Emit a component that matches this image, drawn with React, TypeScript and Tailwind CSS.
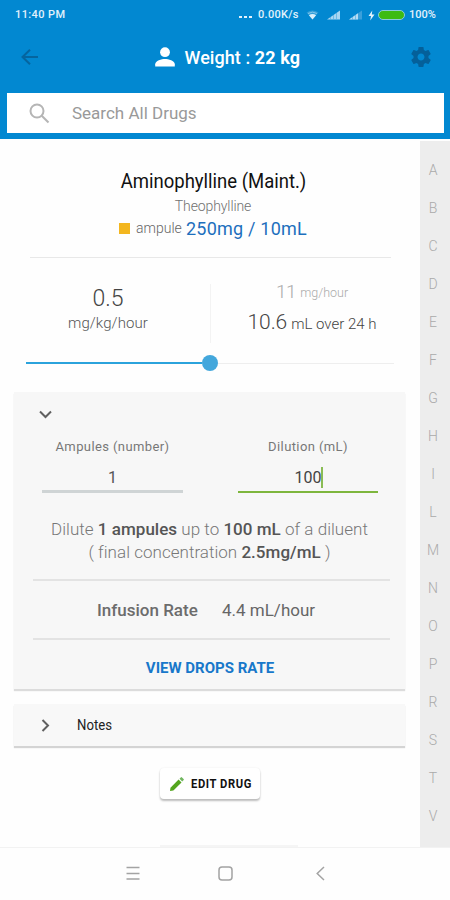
import React from "react";

const LETTERS = ["A", "B", "C", "D", "E", "F", "G", "H", "I", "L", "M", "N", "O", "P", "R", "S", "T", "V"];

function StatusBar() {
  return (
    <div className="flex h-[30px] items-center pl-[15px] pr-[14px] text-[11px] font-medium text-[#e2f2fc]">
      <span className="mr-auto tracking-[0.4px]">11:40 PM</span>
      <svg className="mt-[4px]" width="14" height="4" fill="currentColor">
        <rect x="0" y="1" width="3" height="2" />
        <rect x="5" y="1" width="3" height="2" />
        <rect x="10" y="1" width="3" height="2" />
      </svg>
      <span className="ml-[5px] w-[41px] whitespace-nowrap tracking-[0.3px]">0.00K/s</span>
      <svg className="ml-[7px]" width="13" height="12" viewBox="0 0 13 12" fill="none">
        <path d="M0.5 3.5Q6.5 -0.5 12.5 3.5L6.5 10.5Z" fill="#ffffff" opacity="0.18" />
        <path d="M2 4.5Q6.5 1.7 11 4.5" stroke="#d6edfa" opacity="0.5" />
        <path d="M2.9 6.2Q6.5 3.7 10.1 6.2L6.5 10.5Z" fill="#d9effb" />
      </svg>
      <svg className="ml-[8px]" width="13" height="10" viewBox="0 0 13 10">
        <path d="M0 9.5L13 0.5V9.5Z" fill="#a9d6f2" />
        <path d="M3.5 7V10M6.5 5V10M9.5 3V10" stroke="#55aee1" strokeWidth="0.7" />
      </svg>
      <svg className="ml-[9px]" width="13" height="10" viewBox="0 0 13 10">
        <path d="M0 9.5L13 0.5V9.5Z" fill="#3ba0db" />
        <path d="M0 9.5L9 3.3V9.5Z" fill="#b5dcf4" />
        <path d="M3.5 7V10M6.5 5V10" stroke="#55aee1" strokeWidth="0.7" />
      </svg>
      <svg className="ml-[6px]" width="7" height="11" viewBox="0 0 7 11" fill="currentColor">
        <path d="M4.3 0.5L0.5 6H3L2.2 10.5L6.5 4.6H3.8Z" />
      </svg>
      <span className="ml-[3px] h-[10px] w-[27px] rounded-[5px] border border-[#8ccbd8] bg-[#3dbb12]" />
      <span className="ml-[4px] w-[27px] whitespace-nowrap">100%</span>
    </div>
  );
}

function Header() {
  return (
    <header className="h-[139px] bg-[#0288d1]">
      <StatusBar />
      <div className="flex h-[54px] items-center justify-between pl-[20px] pr-[17px] text-white">
        <svg width="19" height="18" viewBox="0 0 19 18" fill="none" stroke="#05659f" strokeWidth="2">
          <path d="M18 9H2.8M10 1.7L2.5 9L10 16.3" />
        </svg>
        <div className="flex items-center pl-[7px]">
          <svg className="mb-px mr-[10px]" width="20" height="20" viewBox="0 0 20 20" fill="currentColor">
            <circle cx="10" cy="5.2" r="4.9" />
            <path d="M0.2 19.5V17.2C0.2 13.9 6.6 12.1 10 12.1S19.8 13.9 19.8 17.2V19.5Z" />
          </svg>
          <div className="w-[116px] whitespace-nowrap text-[18px] font-medium tracking-[0.07px]">
            Weight : <span className="font-bold">22 kg</span>
          </div>
        </div>
        <svg width="24" height="24" viewBox="0 0 24 24" fill="#04609a">
          <path d="M19.43 12.98c.04-.32.07-.64.07-.98s-.03-.66-.07-.98l2.11-1.65c.19-.15.24-.42.12-.64l-2-3.46c-.12-.22-.39-.3-.61-.22l-2.49 1c-.52-.4-1.08-.73-1.69-.98l-.38-2.65C14.46 2.18 14.25 2 14 2h-4c-.25 0-.46.18-.49.42l-.38 2.65c-.61.25-1.17.59-1.69.98l-2.49-1c-.23-.09-.49 0-.61.22l-2 3.46c-.13.22-.07.49.12.64l2.11 1.65c-.04.32-.07.65-.07.98s.03.66.07.98l-2.11 1.65c-.19.15-.24.42-.12.64l2 3.46c.12.22.39.3.61.22l2.49-1c.52.4 1.08.73 1.69.98l.38 2.65c.03.24.24.42.49.42h4c.25 0 .46-.18.49-.42l.38-2.65c.61-.25 1.17-.59 1.69-.98l2.49 1c.23.09.49 0 .61-.22l2-3.46c.12-.22.07-.49-.12-.64l-2.11-1.65zM12 15.5c-1.93 0-3.5-1.57-3.5-3.5s1.57-3.5 3.5-3.5 3.5 1.57 3.5 3.5-1.57 3.5-3.5 3.5z" />
        </svg>
      </div>
      <div className="ml-[7px] mr-[6px] mt-[9px] flex h-[40px] items-center bg-white pl-[22px]">
        <svg width="21" height="21" viewBox="0 0 21 21" fill="none" stroke="#b5b5b5" strokeWidth="2">
          <circle cx="8" cy="8" r="6.5" />
          <path d="M12.7 12.7L19.5 19.5" />
        </svg>
        <span className="ml-[22px] mt-[2px] text-[17px] text-[#999]">Search All Drugs</span>
      </div>
    </header>
  );
}

function DrugTitle() {
  return (
    <section className="mx-[30px] flex h-[119px] w-[361px] flex-col items-center border-b border-[#e8e8e8] pl-[5px] pt-[30px]">
      <h1 className="flex h-[24px] w-[185px] origin-center scale-x-[0.925] items-center justify-center whitespace-nowrap text-[20px] text-[#111]">
        Aminophylline (Maint.)
      </h1>
      <div className="mt-[4px] flex h-[18px] items-center text-[14px] font-light tracking-[-0.1px] text-[#707070]">Theophylline</div>
      <div className="mt-[1px] flex h-[24px] items-center">
        <span className="mt-[1px] size-[11px] bg-[#f3b61f]" />
        <span className="ml-[6px] w-[46px] text-[14px] font-light text-[#666]">ampule</span>
        <span className="ml-[4px] text-[18px] tracking-[0.22px] text-[#1d6fbd]">250mg / 10mL</span>
      </div>
    </section>
  );
}

function Dose() {
  return (
    <section className="h-[134px]">
      <div className="flex pl-[6px] pt-[26px]">
        <div className="flex h-[59px] w-[205px] flex-col items-center border-r border-[#f3f3f3] font-light text-[#444]">
          <div className="flex h-[28px] items-center pt-[2px] text-[23px]">0.5</div>
          <div className="flex h-[23px] items-center text-[15px] tracking-[0.1px] text-[#555]">mg/kg/hour</div>
        </div>
        <div className="flex h-[59px] w-[202px] flex-col items-center font-light text-[#444]">
          <div className="flex h-[16px] items-center text-[#aaa]">
            <span className="text-[19px] tracking-[-0.4px]">11</span>
            <span className="ml-[4px] mt-[2px] text-[12.5px]">mg/hour</span>
          </div>
          <div className="mt-[7px] flex h-[25px] items-baseline whitespace-nowrap">
            <span className="text-[21px] tracking-[-0.1px]">10.6</span>
            <span className="ml-[4px] text-[15px]">mL over 24 h</span>
          </div>
        </div>
      </div>
      <div className="ml-[26px] mt-[12px] flex h-[16px] w-[368px] items-center">
        <span className="h-[2px] w-[176px] bg-[#2ba3dc]" />
        <span className="size-[16px] rounded-full bg-[#43a7dc]" />
        <span className="h-px flex-1 bg-[#eeeeee]" />
      </div>
    </section>
  );
}

function DilutionCard() {
  return (
    <section className="ml-[14px] flex h-[297px] w-[391px] flex-col bg-[#f7f7f7] shadow-[0_2px_1px_#dcdcdc]">
      <svg className="ml-[25px] mt-[18px] shrink-0" width="13" height="9" viewBox="0 0 13 9" fill="none" stroke="#606060" strokeWidth="2">
        <path d="M1 1.5L6.5 7L12 1.5" />
      </svg>
      <div className="mt-[15px] flex pl-[28px]">
        <div className="flex w-[141px] flex-col items-center border-b-[3px] border-[#cfd4d5] text-[#555]">
          <div className="flex h-[24px] items-center pt-px text-[13px] tracking-[0.4px] text-[#777]">Ampules (number)</div>
          <div className="flex h-[32px] w-full items-center justify-center pt-[7px] text-[16px]">1</div>
        </div>
        <div className="ml-[55px] flex h-[59px] w-[140px] flex-col items-center border-b-[2px] border-[#7eb63d] text-[#444]">
          <div className="flex h-[24px] items-center pt-px text-[13px] tracking-[0.4px] text-[#777]">Dilution (mL)</div>
          <div className="flex h-[33px] items-center pl-[2px] pt-[6px] text-[16px]">
            100
            <span className="mb-[1px] h-[21px] w-[2px] bg-[#8abc55]" />
          </div>
        </div>
      </div>
      <div className="mt-[25px] flex flex-col items-center text-[17px] font-light leading-[23px] text-[#777]">
        <p className="whitespace-nowrap tracking-[0.03px]">
          Dilute <b className="font-medium text-[#555]">1 ampules</b> up to <b className="font-medium text-[#555]">100 mL</b> of a diluent
        </p>
        <p className="whitespace-nowrap tracking-[0.03px]">
          ( final concentration <b className="font-medium text-[#555]">2.5mg/mL</b> )
        </p>
      </div>
      <div className="ml-[19px] mt-[15px] flex h-[61px] w-[357px] shrink-0 items-center border-y-2 border-[#e3e3e3] pl-[64px] pt-[2px] text-[17px] text-[#6c6c6c]">
        <span className="w-[101px] whitespace-nowrap font-medium">Infusion Rate</span>
        <span className="ml-[24px] whitespace-nowrap text-[#666]">4.4 mL/hour</span>
      </div>
      <button className="mt-[17px] flex h-[22px] items-center justify-center pl-px text-[15px] font-bold text-[#1878ca]">VIEW DROPS RATE</button>
    </section>
  );
}

function AlphabetIndex() {
  return (
    <aside className="mt-[2px] flex h-[706px] w-[30px] flex-col items-center bg-[#ededed] pt-[10px] pr-[4px] text-[14px] font-light text-[#aaa]">
      {LETTERS.map((letter) => (
        <span key={letter} className="flex h-[38px] items-center">{letter}</span>
      ))}
    </aside>
  );
}

export default function App() {
  return (
    <div className="flex h-[900px] w-[450px] flex-col overflow-hidden bg-[#fefefe] font-[Roboto,sans-serif]">
      <Header />
      <div className="flex h-[708px]">
        <main className="flex w-[420px] flex-col">
          <DrugTitle />
          <Dose />
          <DilutionCard />
          <div className="ml-[14px] mt-[15px] flex h-[42px] w-[391px] items-center bg-[#f8f8f8] pl-[27px] shadow-[0_2px_1px_#d4d4d4]">
            <svg width="9" height="13" viewBox="0 0 9 13" fill="none" stroke="#606060" strokeWidth="2">
              <path d="M1.5 1L7 6.5L1.5 12" />
            </svg>
            <span className="ml-[27px] mt-[1px] origin-left scale-x-[0.94] text-[14px] text-[#222]">Notes</span>
          </div>
          <button className="ml-[160px] mt-[22px] flex h-[31px] w-[100px] shrink-0 items-center rounded-[4px] bg-white pl-[10px] shadow-[0_2px_2px_#bdbdbd,0_0_2px_#ededed]">
            <svg width="14" height="14" viewBox="0 0 14 14" fill="#54a51e">
              <path d="M0 14L0.5 10.7L8.6 2.6L11.5 5.5L3.4 13.6Z" />
              <path d="M9.5 1.8L11 0.3Q11.5 -0.1 12 0.4L13.6 2Q14.1 2.5 13.7 3L12.2 4.5Z" fill="#71b660" />
            </svg>
            <span className="ml-[7px] w-[61px] origin-left scale-x-[0.86] whitespace-nowrap text-[13px] font-bold tracking-[0.7px] text-[#111]">EDIT DRUG</span>
          </button>
          <div className="ml-[160px] mt-auto h-[2px] w-[138px] shrink-0 bg-[#f5f5f5]" />
        </main>
        <AlphabetIndex />
      </div>
      <nav className="flex flex-1 items-start border-t border-[#f2f2f2] pl-[126px] pt-[18px] text-[#a3a3a3]">
        <svg width="14" height="15" fill="none" stroke="currentColor" strokeWidth="1.5">
          <path d="M0.5 1.5H13.5M0.5 7.5H13.5M0.5 13H13.5" />
        </svg>
        <svg className="ml-[78px]" width="15" height="15" fill="none" stroke="currentColor" strokeWidth="1.5">
          <rect x="1" y="1" width="13" height="13" rx="3" />
        </svg>
        <svg className="ml-[83px]" width="9" height="15" fill="none" stroke="currentColor" strokeWidth="1.5">
          <path d="M8 1L1.2 7.5L8 14" />
        </svg>
      </nav>
    </div>
  );
}
